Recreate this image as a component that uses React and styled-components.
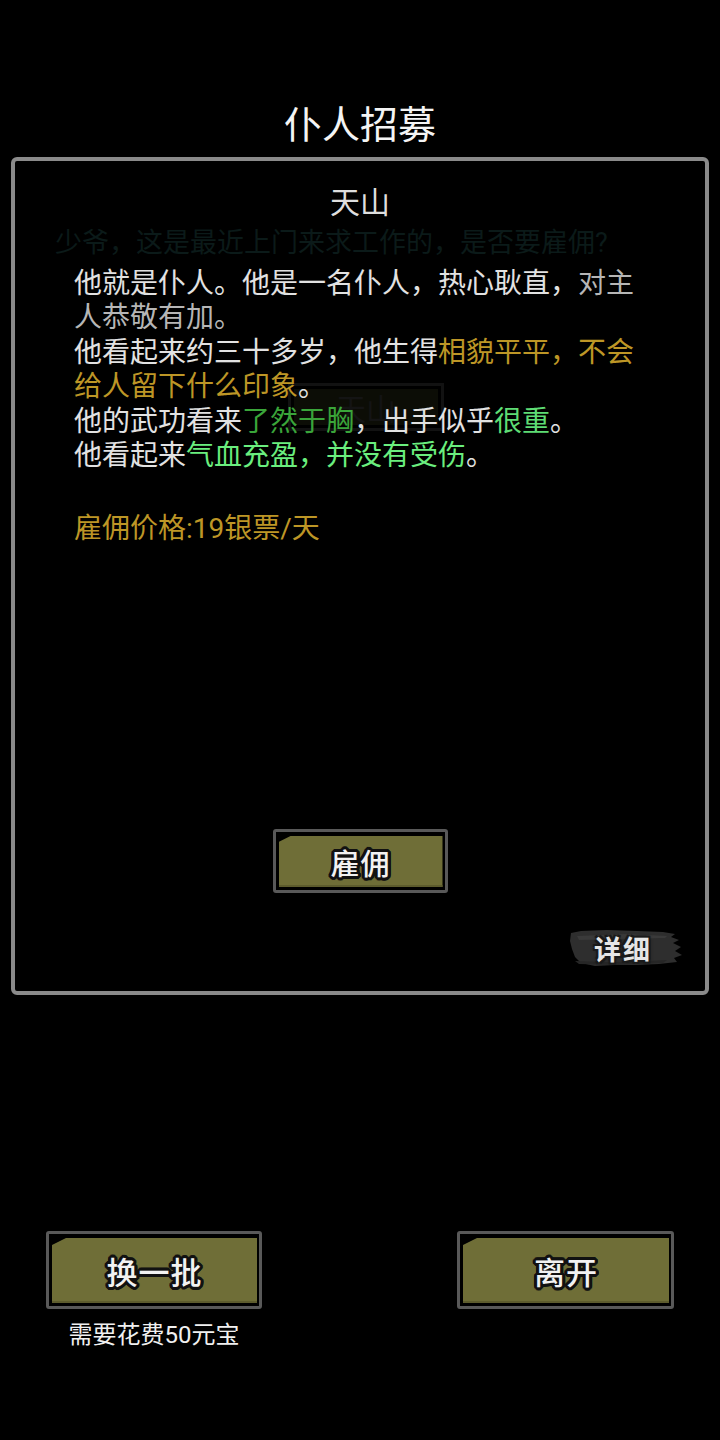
import styled, { createGlobalStyle } from "styled-components"

const GlobalStyle = createGlobalStyle`
    html, body {
        margin: 0;
        padding: 0;
        background: #000;
    }
    body {
        font-family: Roboto, "Noto Sans CJK SC", sans-serif;
    }
`

const Page = styled.div`
    width: 720px;
    height: 1440px;
    background: #000;
    display: flex;
    flex-direction: column;
    box-sizing: border-box;
    overflow: hidden;
`
const Title = styled.div`
    margin-top: 100px;
    height: 53px;
    line-height: 50px;
    text-align: center;
    color: #f4f4f4;
    font-size: 38px;
`
const Panel = styled.div`
    position: relative;
    margin: 4px 11px 0;
    height: 838px;
    box-sizing: border-box;
    border: 4px solid #8a8a8a;
    border-radius: 6px;
    display: flex;
    flex-direction: column;
    padding: 22px 0 22px 0;
`
const Name = styled.div`
    text-align: center;
    color: #dedede;
    font-size: 30px;
    line-height: 40px;
    position: relative;
    z-index: 1;
`
const FadedLine = styled.div`
    margin-top: 3px;
    padding-left: 40px;
    color: #0b1a19;
    font-size: 27px;
    line-height: 34px;
    white-space: nowrap;
`
const FadedButton = styled.div`
    position: absolute;
    left: 273px;
    top: 222px;
    width: 156px;
    height: 48px;
    box-sizing: border-box;
    border: 3px solid #121212;
    padding: 3px;
    display: flex;
    > div {
        flex: 1;
        background: #0c0d06;
        color: #141414;
        font-size: 30px;
        display: flex;
        align-items: center;
        justify-content: center;
    }
`
const Description = styled.div`
    position: relative;
    z-index: 1;
    margin-top: 7px;
    padding-left: 59px;
    width: 566px;
    font-size: 28px;
    line-height: 34.4px;
    color: #e2e2e2;
`
const Para = styled.div``
const Tone = styled.span`
    color: ${p => p.$c};
`
const Price = styled.div`
    position: relative;
    margin-top: 39px;
    padding-left: 59px;
    font-size: 28px;
    line-height: 34px;
    color: #bd9626;
`
const HireRow = styled.div`
    margin-top: auto;
    display: flex;
    justify-content: center;
`
const ButtonFrame = styled.div`
    width: ${p => p.$w}px;
    height: ${p => p.$h}px;
    box-sizing: border-box;
    border: 3px solid #595959;
    border-radius: 3px;
    padding: 4px 2px 3px 3px;
    display: flex;
    background: #000;
`
const ButtonFace = styled.div`
    flex: 1;
    background: #6f6e37;
    box-shadow: inset 0 -2px 0 #5d5c2d;
    clip-path: polygon(0 ${p => p.$cut}px, ${p => p.$cut * 2}px 0, 100% 0, 100% 100%, 0 100%);
    display: flex;
    align-items: center;
    justify-content: center;
    color: #f2f2f2;
    font-size: ${p => p.$fs}px;
    font-weight: 500;
    letter-spacing: 1px;
    text-shadow:
        3px 0 0 #111, -3px 0 0 #111, 0 3px 0 #111, 0 -3px 0 #111,
        2px 2px 0 #111, -2px 2px 0 #111, 2px -2px 0 #111, -2px -2px 0 #111,
        3px 1px 0 #111, -3px 1px 0 #111, 1px 3px 0 #111, 1px -3px 0 #111,
        3px -1px 0 #111, -3px -1px 0 #111, -1px 3px 0 #111, -1px -3px 0 #111;
`
const DetailRow = styled.div`
    margin-top: 34px;
    display: flex;
    justify-content: flex-end;
    padding-right: 20px;
`
const Detail = styled.div`
    position: relative;
    width: 118px;
    height: 42px;
    display: flex;
    align-items: center;
    justify-content: center;
    svg {
        position: absolute;
        inset: 0;
    }
    span {
        position: relative;
        color: #e6e6e6;
        font-size: 27px;
        font-weight: 700;
        letter-spacing: 2px;
        margin-right: 6px;
        text-shadow: 2px 2px 0 #1a1a1a, -2px 2px 0 #1a1a1a, 2px -2px 0 #1a1a1a, -2px -2px 0 #1a1a1a, 0 0 4px #000;
    }
`
const BottomRow = styled.div`
    margin-top: 236px;
    padding: 0 46px;
    display: flex;
    justify-content: space-between;
    align-items: flex-start;
`
const BottomCol = styled.div`
    display: flex;
    flex-direction: column;
    align-items: center;
`
const Caption = styled.div`
    margin-top: 11px;
    color: #f0f0f0;
    font-size: 24px;
    line-height: 30px;
`

const Brush = () => (
    <svg width="118" height="42" viewBox="0 0 118 42">
        <path
            d="M4 6 L14 4 L40 3 L70 4 L96 5 L108 7 L104 10 L112 13 L106 16 L114 20 L108 24 L115 28 L107 31 L110 35 L92 37 L70 38 L48 38 L28 39 L14 36 L8 30 L5 22 L3 14 Z"
            fill="#2e2e2e"
        />
        <path d="M10 9 L60 7 L100 9 L98 11 L50 12 L12 13 Z" fill="#3a3a3a" />
        <path d="M8 34 L40 35 L80 34 L100 33 L96 36 L50 38 L12 37 Z" fill="#262626" />
    </svg>
)

const App = () => {
    return (
        <Page>
            <GlobalStyle />
            <Title>仆人招募</Title>
            <Panel>
                <FadedButton><div>天山</div></FadedButton>
                <Name>天山</Name>
                <FadedLine>少爷，这是最近上门来求工作的，是否要雇佣?</FadedLine>
                <Description>
                    <Para>他就是仆人。他是一名仆人，热心耿直，<Tone $c="#b6b6b6">对主人恭敬有加。</Tone></Para>
                    <Para>他看起来约三十多岁，他生得<Tone $c="#bd9626">相貌平平，不会给人留下什么印象</Tone>。</Para>
                    <Para>他的武功看来<Tone $c="#3aa53a">了然于胸</Tone>，出手似乎<Tone $c="#5edc74">很重</Tone>。</Para>
                    <Para>他看起来<Tone $c="#6aee7e">气血充盈，并没有受伤</Tone>。</Para>
                </Description>
                <Price>雇佣价格:19银票/天</Price>
                <HireRow>
                    <ButtonFrame $w={175} $h={64}>
                        <ButtonFace $cut={6} $fs={29}>雇佣</ButtonFace>
                    </ButtonFrame>
                </HireRow>
                <DetailRow>
                    <Detail>
                        <Brush />
                        <span>详细</span>
                    </Detail>
                </DetailRow>
            </Panel>
            <BottomRow>
                <BottomCol>
                    <ButtonFrame $w={216} $h={78}>
                        <ButtonFace $cut={7} $fs={31}>换一批</ButtonFace>
                    </ButtonFrame>
                    <Caption>需要花费50元宝</Caption>
                </BottomCol>
                <BottomCol>
                    <ButtonFrame $w={217} $h={78}>
                        <ButtonFace $cut={7} $fs={31}>离开</ButtonFace>
                    </ButtonFrame>
                </BottomCol>
            </BottomRow>
        </Page>
    )
}

export default App
